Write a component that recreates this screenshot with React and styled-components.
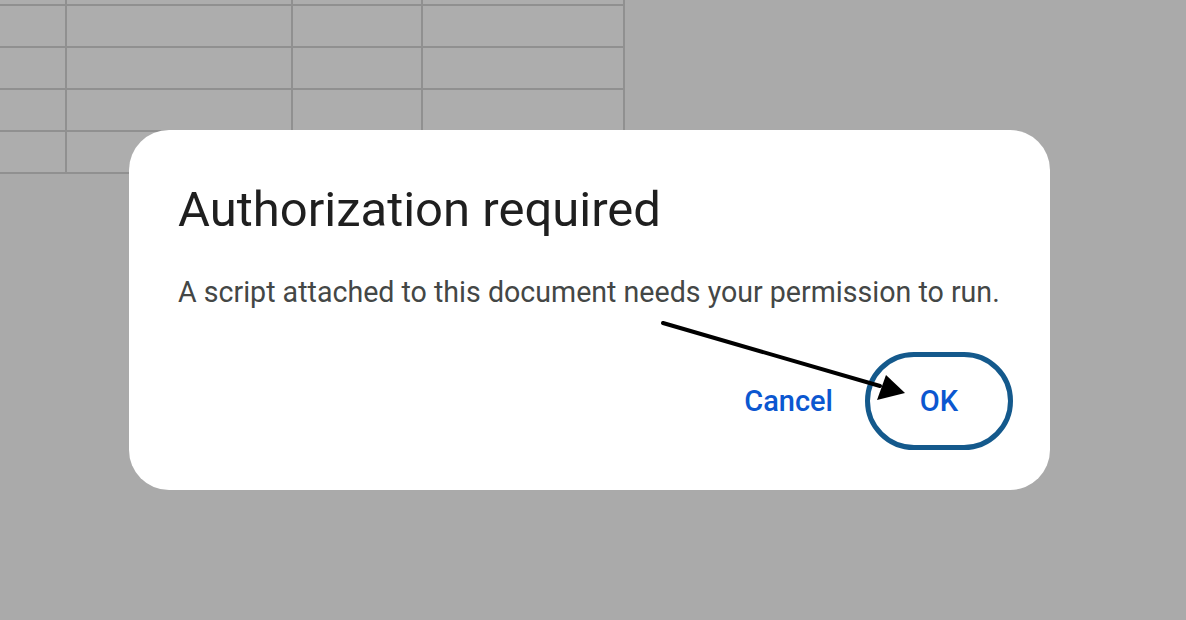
import React from 'react';
import styled, { createGlobalStyle } from 'styled-components';

const GlobalStyle = createGlobalStyle`
  html, body {
    margin: 0;
    padding: 0;
    background: #aaaaaa;
    overflow: hidden;
  }
  body {
    font-family: Roboto, "Liberation Sans", sans-serif;
  }
`;

const Page = styled.div`
  position: relative;
  width: 1186px;
  height: 620px;
  background: #aaaaaa;
  overflow: hidden;
`;

const Sheet = styled.div`
  display: grid;
  grid-template-columns: 65px 224px 128px 200px;
  grid-auto-rows: 40px;
  gap: 2px;
  width: max-content;
  margin-top: -36px;
  padding: 0 2px 2px 0;
  background: #909090;
`;

const Cell = styled.div`
  background: #adadad;
`;

const Overlay = styled.div`
  position: absolute;
  inset: 0;
  display: flex;
  align-items: center;
  justify-content: center;
`;

const Dialog = styled.div`
  box-sizing: border-box;
  width: 921px;
  height: 360px;
  margin-left: -7px;
  padding: 50px 37px 0 49px;
  background: #ffffff;
  border-radius: 40px;
  display: flex;
  flex-direction: column;
`;

const Title = styled.h1`
  margin: 0;
  font-family: Roboto, "Liberation Sans", sans-serif;
  font-size: 49px;
  font-weight: 400;
  line-height: 60px;
  color: #1f1f1f;
`;

const Message = styled.p`
  margin: 35px 0 0;
  font-size: 28.6px;
  line-height: 34px;
  color: #444746;
`;

const Actions = styled.div`
  display: flex;
  justify-content: flex-end;
  align-items: center;
  gap: 32px;
  margin-top: 43px;
`;

const TextButton = styled.button`
  box-sizing: border-box;
  font-family: Roboto, "Liberation Sans", sans-serif;
  font-size: 29px;
  font-weight: 500;
  color: #0b57d0;
  background: transparent;
  cursor: pointer;
  padding: 0;
  border: ${p => (p.$highlight ? '5px solid #14598c' : 'none')};
  border-radius: 49px;
  width: ${p => (p.$highlight ? '148px' : 'auto')};
  height: ${p => (p.$highlight ? '98px' : 'auto')};
`;

const Annotation = styled.svg`
  position: absolute;
  left: 0;
  top: 0;
  pointer-events: none;
`;

export default function App() {
  const cells = Array.from({ length: 20 });
  return (
    <Page>
      <GlobalStyle />
      <Sheet>
        {cells.map((_, i) => (
          <Cell key={i} />
        ))}
      </Sheet>
      <Overlay>
        <Dialog>
          <Title>Authorization required</Title>
          <Message>A script attached to this document needs your permission to run.</Message>
          <Actions>
            <TextButton>Cancel</TextButton>
            <TextButton $highlight>OK</TextButton>
          </Actions>
        </Dialog>
      </Overlay>
      <Annotation width="1186" height="620" viewBox="0 0 1186 620">
        <line x1="663" y1="323" x2="880" y2="386" stroke="#000" strokeWidth="4" strokeLinecap="round" />
        <polygon points="905,393 877,400 886,375" fill="#000" />
      </Annotation>
    </Page>
  );
}
